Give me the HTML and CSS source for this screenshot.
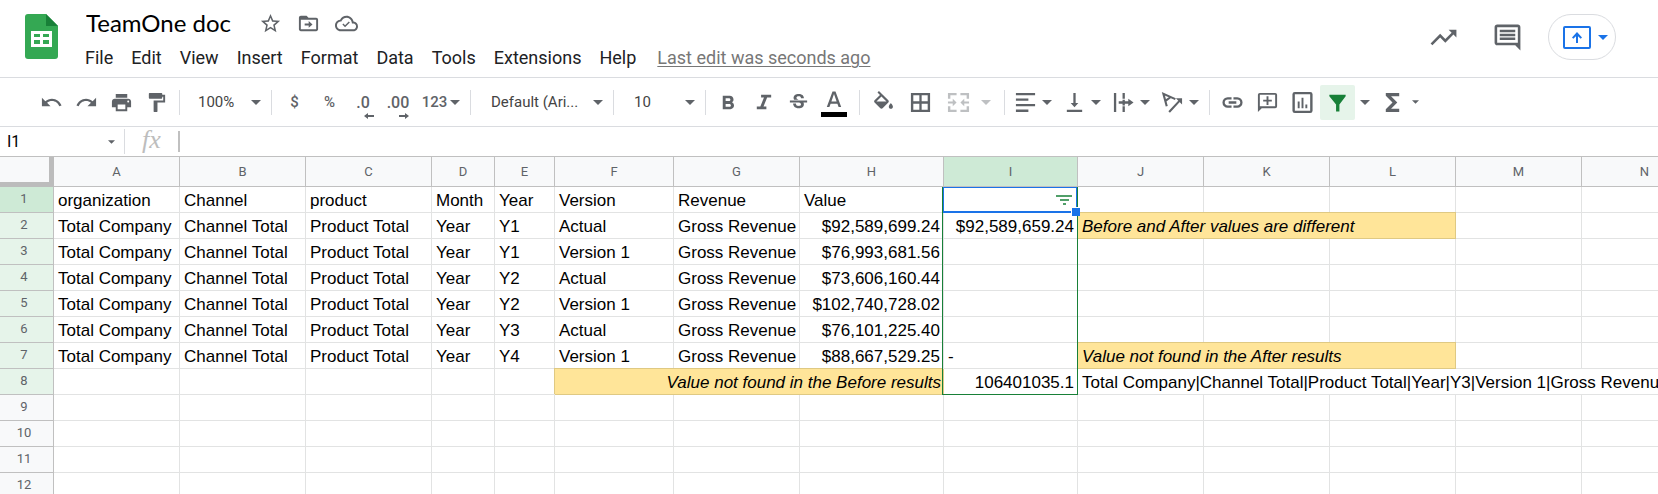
FILE: index.html
```html
<!DOCTYPE html>
<html lang="en">
<head>
<meta charset="utf-8">
<title>TeamOne doc</title>
<link rel="stylesheet" href="styles.css">
</head>
<body>
<svg class="defs" aria-hidden="true">
  <symbol id="caret" viewBox="0 0 10 5"><path d="M0 0h10L5 5z"/></symbol>
</svg>
<header class="header">
  <svg class="logo" viewBox="0 0 33 45" aria-label="Sheets"><path fill="#34a853" d="M3 0h18l12 12v30a3 3 0 0 1-3 3H3a3 3 0 0 1-3-3V3a3 3 0 0 1 3-3z"/><path fill="#188038" d="M21 0l12 12H21z"/><path fill="#fff" fill-rule="evenodd" d="M6 17h21v16H6zM9 20v3h6v-3zM18 20v3h6v-3zM9 26v4h6v-4zM18 26v4h6v-4z"/></svg>
  <div class="doc">
    <div class="title-row">
      <input class="title" aria-label="Document title" value="TeamOne doc">
      <button class="mini" aria-label="Star"><svg viewBox="0 0 24 24"><path d="M22 9.24l-7.19-.62L12 2 9.19 8.63 2 9.24l5.46 4.73L5.82 21 12 17.27 18.18 21l-1.63-7.03L22 9.24zM12 15.4l-3.76 2.27 1-4.28-3.32-2.88 4.38-.38L12 6.1l1.71 4.04 4.38.38-3.32 2.88 1 4.28L12 15.4z"/></svg></button>
      <button class="mini" aria-label="Move"><svg viewBox="0 0 24 24"><path d="M20 6h-8l-2-2H4c-1.100 0-2 .9-2 2v12c0 1.100.9 2 2 2h16c1.100 0 2-.9 2-2V8c0-1.100-.9-2-2-2zm0 12H4V8h16v10zM12.200 16.500l4-3.500-4-3.500V12H8v2h4.200z"/></svg></button>
      <button class="mini" aria-label="Document status"><svg viewBox="0 0 24 24"><path d="M19.350 10.040C18.670 6.590 15.640 4 12 4 9.110 4 6.600 5.640 5.350 8.040 2.340 8.360 0 10.910 0 14c0 3.310 2.690 6 6 6h13c2.760 0 5-2.240 5-5 0-2.640-2.050-4.780-4.650-4.960zM19 18H6c-2.210 0-4-1.790-4-4 0-2.050 1.530-3.760 3.560-3.970l1.070-.11.5-.95C8.080 7.140 9.940 6 12 6c2.620 0 4.880 1.860 5.390 4.430l.3 1.500 1.530.11c1.560.1 2.780 1.410 2.780 2.960 0 1.650-1.350 3-3 3zM10.500 13.700l-1.700-1.700-1.100 1.100 2.800 2.800 5-5-1.100-1.100z"/></svg></button>
    </div>
    <nav class="menu">
      <button>File</button><button>Edit</button><button>View</button><button>Insert</button><button>Format</button><button>Data</button><button>Tools</button><button>Extensions</button><button>Help</button>
      <a class="last-edit" href="#">Last edit was seconds ago</a>
    </nav>
  </div>
  <div class="actions">
    <button aria-label="Activity"><svg viewBox="0 0 24 24"><path d="M16 6l2.290 2.290-4.880 4.880-4-4L2 16.590 3.410 18l6-6 4 4 6.300-6.290L22 12V6z"/></svg></button>
    <button aria-label="Comments"><svg viewBox="0 0 24 24"><path d="M21.990 4c0-1.100-.89-2-1.990-2H4c-1.100 0-2 .9-2 2v12c0 1.100.9 2 2 2h14l4 4-.010-18zM20 16H4V4h16v12zM6 12h12v2H6zm0-3h12v2H6zm0-3h12v2H6z"/></svg></button>
    <button class="present" aria-label="Present"><svg class="present-icon" viewBox="0 0 28 23"><path fill="none" stroke="currentColor" stroke-width="2" d="M2 1h24a1 1 0 0 1 1 1v19a1 1 0 0 1-1 1H2a1 1 0 0 1-1-1V2a1 1 0 0 1 1-1z"/><path d="M14 6l5 5.500-1.300 1.300-2.700-2.600V17h-2v-6.800l-2.700 2.600L9 11.500z"/></svg><svg class="caret"><use href="#caret"/></svg></button>
  </div>
</header>

<div class="toolbar" role="toolbar">
  <div class="group">
    <button aria-label="Undo"><svg viewBox="0 0 24 24"><path d="M12.500 8c-2.650 0-5.050.99-6.900 2.600L2 7v9h9l-3.620-3.620c1.390-1.160 3.160-1.880 5.120-1.880 3.540 0 6.550 2.310 7.600 5.500l2.370-.78C21.080 11.030 17.150 8 12.500 8z"/></svg></button>
    <button aria-label="Redo"><svg viewBox="0 0 24 24"><path d="M18.400 10.600C16.550 8.990 14.150 8 11.500 8c-4.650 0-8.580 3.030-9.960 7.220L3.900 16c1.050-3.190 4.050-5.500 7.600-5.500 1.950 0 3.730.72 5.120 1.880L13 16h9V7l-3.600 3.600z"/></svg></button>
    <button aria-label="Print"><svg viewBox="0 0 24 24"><path d="M19 8H5c-1.660 0-3 1.340-3 3v6h4v4h12v-4h4v-6c0-1.660-1.340-3-3-3zm-3 11H8v-5h8v5zm3-7c-.55 0-1-.45-1-1s.45-1 1-1 1 .45 1 1-.45 1-1 1zm-1-9H6v4h12V3z"/></svg></button>
    <button aria-label="Paint format"><svg viewBox="0 0 24 24"><path d="M18 4V3c0-.55-.45-1-1-1H5c-.55 0-1 .45-1 1v4c0 .55.45 1 1 1h12c.55 0 1-.45 1-1V6h1v4H9v11c0 .55.45 1 1 1h2c.55 0 1-.45 1-1v-9h8V4h-3z"/></svg></button>
  </div>
  <label class="pick pick-zoom"><select aria-label="Zoom"><option>100%</option></select><svg class="caret"><use href="#caret"/></svg></label>
  <div class="group">
    <button>$</button>
    <button>%</button>
    <button class="decimal" aria-label="Decrease decimal places">.0<svg viewBox="0 0 10 6"><path d="M10 2H4V0L0 3l4 3V4h6z"/></svg></button>
    <button class="decimal" aria-label="Increase decimal places">.00<svg viewBox="0 0 10 6"><path d="M0 2h6V0l4 3-4 3V4H0z"/></svg></button>
    <button class="formats">123<svg class="caret"><use href="#caret"/></svg></button>
  </div>
  <label class="pick pick-font"><select aria-label="Font"><option>Default (Ari...</option></select><svg class="caret"><use href="#caret"/></svg></label>
  <label class="pick pick-size"><select aria-label="Font size"><option>10</option></select><svg class="caret"><use href="#caret"/></svg></label>
  <div class="group">
    <button aria-label="Bold"><svg viewBox="0 0 24 24"><path d="M15.600 11.790c.97-.67 1.650-1.770 1.650-2.790 0-2.260-1.750-4-4-4H6v14h8.040c2.090 0 3.710-1.700 3.710-3.790 0-1.520-.86-2.820-2.150-3.420zM9 7.500h3.500c.83 0 1.500.67 1.500 1.500s-.67 1.500-1.500 1.500H9v-3zm4 9H9v-3h4c.83 0 1.500.67 1.500 1.500s-.67 1.500-1.500 1.500z"/></svg></button>
    <button aria-label="Italic"><svg viewBox="0 0 24 24"><path d="M9.500 4v2.800h3L8.700 16.200H5V19h10v-2.800h-3l3.800-9.400H20V4z"/></svg></button>
    <button aria-label="Strikethrough"><svg viewBox="0 0 24 24"><path d="M7.240 8.750c-.26-.48-.39-1.030-.39-1.670 0-.61.13-1.160.4-1.670.26-.5.63-.93 1.110-1.290.48-.35 1.050-.63 1.700-.83.66-.19 1.390-.29 2.180-.29.81 0 1.540.11 2.210.34.66.22 1.230.54 1.690.94.47.4.83.88 1.080 1.430s.38 1.150.38 1.810h-3.010c0-.31-.05-.59-.15-.85-.09-.27-.24-.49-.44-.68-.2-.19-.45-.33-.75-.44-.3-.1-.66-.16-1.060-.16-.39 0-.74.04-1.030.13s-.53.21-.72.36c-.19.16-.34.34-.44.55-.1.21-.15.43-.15.66 0 .48.25.88.74 1.210.38.25.77.48 1.410.7H7.390c-.05-.08-.11-.17-.15-.25zM21 12v-2H3v2h9.620c.18.070.4.140.55.200.37.170.66.340.87.510s.35.360.43.570c.07.200.11.430.11.690 0 .23-.05.450-.14.660-.09.200-.23.380-.42.530-.19.150-.42.260-.71.350-.29.080-.63.130-1.010.13-.43 0-.83-.04-1.180-.13s-.66-.23-.91-.42c-.25-.19-.45-.44-.59-.75s-.25-.76-.25-1.210H6.400c0 .55.08 1.130.24 1.580s.37.850.65 1.210c.28.350.6.660.98.920.37.260.78.480 1.220.65.44.170.9.300 1.380.39.48.080.96.130 1.440.13.8 0 1.530-.09 2.180-.28s1.210-.45 1.670-.79c.46-.34.82-.77 1.070-1.270s.38-1.070.38-1.710c0-.6-.1-1.140-.31-1.610-.05-.11-.11-.23-.17-.33H21z"/></svg></button>
    <button class="text-color" aria-label="Text color"><svg viewBox="0 -2 28 28"><path d="M12.500 1.500 6.800 17h2.600l1.200-3.300h6.800l1.200 3.300h2.600L15.500 1.500zm-1.100 9.900L14 4l2.600 7.400z"/><path fill="#000" d="M1 22h26v5H1z"/></svg></button>
  </div>
  <span class="rule rule-wide"></span>
  <div class="group cells">
    <button aria-label="Fill color"><svg viewBox="0 0 22 22"><path d="M16.560 8.940L7.620 0 6.210 1.410l2.380 2.380-5.150 5.150c-.59.59-.59 1.540 0 2.120l5.500 5.500c.29.29.68.44 1.060.44s.77-.15 1.060-.44l5.500-5.500c.59-.58.59-1.530 0-2.120zM5.210 10L10 5.210 14.790 10H5.210zM19 11.500s-2 2.170-2 3.500c0 1.100.9 2 2 2s2-.9 2-2c0-1.330-2-3.500-2-3.500z"/></svg></button>
    <button aria-label="Borders"><svg viewBox="0 0 24 24"><path d="M2 2v20h20V2H2zm8.800 17.500H4.500v-6.300h6.300zm0-8.700H4.500V4.500h6.300zm8.700 8.700h-6.300v-6.300h6.300zm0-8.700h-6.300V4.500h6.300z"/></svg></button>
    <button class="off" aria-label="Merge cells"><svg viewBox="0 0 24 24"><path d="M1 2h9v2.500H3.500V8H1zM14 2h9v6h-2.500V4.500H14zM1 16h2.500v3.500H10V22H1zM20.500 16H23v6h-9v-2.500h6.500zM1 11h5V8l4 4-4 4v-3H1zM23 11h-5V8l-4 4 4 4v-3h5z"/></svg></button>
  </div>
  <button class="more off" aria-label="Merge options"><svg class="caret"><use href="#caret"/></svg></button>
  <span class="rule rule-align"></span>
  <div class="group combos">
    <button aria-label="Horizontal align"><svg viewBox="0 0 24 24"><path d="M2 2h20v2.500H2zM2 7.800h13v2.500H2zM2 13.500h20V16H2zM2 19.300h13v2.500H2z"/></svg><svg class="caret"><use href="#caret"/></svg></button>
    <button aria-label="Vertical align"><svg viewBox="0 0 24 24"><path d="M16 12.500h-2.800V2h-2.400v10.500H8l4 4.500zM4 19.500V22h16v-2.500z"/></svg><svg class="caret"><use href="#caret"/></svg></button>
    <button aria-label="Text wrapping"><svg viewBox="0 0 24 24"><path d="M2 2h2.400v20H2zM11 2h2.400v6H11zM11 16h2.400v6H11zM7 10.800h4V9h2.400v1.800H17V8l5.500 4-5.500 4v-2.800h-3.600V15H11v-1.800H7z"/></svg><svg class="caret"><use href="#caret"/></svg></button>
    <button aria-label="Text rotation"><svg viewBox="0 0 24 24"><path fill="none" stroke="currentColor" stroke-width="2.200" d="M6 16 2.500 3 15 8.500M5 10l5.500-4M8.500 22 20 9.500"/><path d="M15.500 7.500H22V14z"/></svg><svg class="caret"><use href="#caret"/></svg></button>
  </div>
  <span class="rule"></span>
  <div class="group">
    <button aria-label="Insert link"><svg viewBox="0 0 24 24"><path d="M3.900 12c0-1.710 1.390-3.100 3.100-3.100h4V6.500H7a5.500 5.500 0 0 0 0 11h4v-2.400H7c-1.710 0-3.100-1.390-3.100-3.100zM8 13.200h8v-2.400H8v2.400zm9-6.700h-4v2.400h4c1.710 0 3.100 1.390 3.100 3.100s-1.390 3.100-3.100 3.100h-4v2.400h4a5.500 5.500 0 0 0 0-11z"/></svg></button>
    <button aria-label="Insert comment"><svg viewBox="0 0 24 24"><path d="M20 2H4a2 2 0 0 0-2 2v18l4-4h14a2 2 0 0 0 2-2V4a2 2 0 0 0-2-2zm0 14H4V4h16zM11 14.500h2V11h3.500V9H13V5.500h-2V9H7.500v2H11z"/></svg></button>
    <button aria-label="Insert chart"><svg viewBox="0 0 24 24"><path d="M7 11h2v7H7zM11 7h2v11h-2zM15 14h2v4h-2zM20 1H4a2.500 2.500 0 0 0-2.500 2.500v17A2.500 2.500 0 0 0 4 23h16a2.500 2.500 0 0 0 2.500-2.500v-17A2.500 2.500 0 0 0 20 1zm0 19.500H4v-17h16z"/></svg></button>
    <button class="on" aria-label="Filter"><svg viewBox="0 0 24 24"><path d="M3.500 4h17v1.500L14 14v7.500h-3.500V14l-7-8.500z"/></svg></button>
  </div>
  <button class="more" aria-label="Filter views"><svg class="caret"><use href="#caret"/></svg></button>
  <button aria-label="Functions"><svg viewBox="0 0 24 24"><path d="M19 2H5v3l7 7-7 7v3h14v-3.500h-8.500L17 12l-6.500-6.500H19z"/></svg></button>
  <button class="tiny" aria-label="More functions"><svg class="caret" viewBox="0 0 10 5"><path d="M0 0h10L5 5z"/></svg></button>
</div>

<div class="formula">
  <div class="name-box"><input aria-label="Name box" value="I1"><svg class="caret" viewBox="0 0 10 5"><path d="M0 0h10L5 5z"/></svg></div>
  <span class="fx">fx</span>
  <input class="formula-input" aria-label="Formula">
</div>

<main class="sheet">
<table>
  <colgroup><col class="c-head"><col class="c-std"><col class="c-std"><col class="c-std"><col class="c-d"><col class="c-e"><col class="c-f"><col class="c-std"><col class="c-h"><col class="c-i"><col class="c-std"><col class="c-std"><col class="c-std"><col class="c-std"><col class="c-std"></colgroup>
  <thead>
    <tr><td class="corner"></td><th>A</th><th>B</th><th>C</th><th>D</th><th>E</th><th>F</th><th>G</th><th>H</th><th class="current">I</th><th>J</th><th>K</th><th>L</th><th>M</th><th>N</th></tr>
  </thead>
  <tbody>
    <tr><th class="current">1</th><td>organization</td><td>Channel</td><td>product</td><td>Month</td><td>Year</td><td>Version</td><td>Revenue</td><td>Value</td><td class="active"><div class="range"></div><div class="cursor"></div><div class="handle"></div><svg class="filter-mark" viewBox="0 0 16 10"><path d="M0 0h16v2H0zM4 4h9v2H4zM7 8h3v2H7z"/></svg></td><td></td><td></td><td></td><td></td><td></td></tr>
    <tr class="in"><th>2</th><td>Total Company</td><td>Channel Total</td><td>Product Total</td><td>Year</td><td>Y1</td><td>Actual</td><td>Gross Revenue</td><td class="num">$92,589,699.24</td><td class="num">$92,589,659.24</td><td class="note" colspan="3">Before and After values are different</td><td></td><td></td></tr>
    <tr class="in"><th>3</th><td>Total Company</td><td>Channel Total</td><td>Product Total</td><td>Year</td><td>Y1</td><td>Version 1</td><td>Gross Revenue</td><td class="num">$76,993,681.56</td><td></td><td></td><td></td><td></td><td></td><td></td></tr>
    <tr class="in"><th>4</th><td>Total Company</td><td>Channel Total</td><td>Product Total</td><td>Year</td><td>Y2</td><td>Actual</td><td>Gross Revenue</td><td class="num">$73,606,160.44</td><td></td><td></td><td></td><td></td><td></td><td></td></tr>
    <tr class="in"><th>5</th><td>Total Company</td><td>Channel Total</td><td>Product Total</td><td>Year</td><td>Y2</td><td>Version 1</td><td>Gross Revenue</td><td class="num">$102,740,728.02</td><td></td><td></td><td></td><td></td><td></td><td></td></tr>
    <tr class="in"><th>6</th><td>Total Company</td><td>Channel Total</td><td>Product Total</td><td>Year</td><td>Y3</td><td>Actual</td><td>Gross Revenue</td><td class="num">$76,101,225.40</td><td></td><td></td><td></td><td></td><td></td><td></td></tr>
    <tr class="in"><th>7</th><td>Total Company</td><td>Channel Total</td><td>Product Total</td><td>Year</td><td>Y4</td><td>Version 1</td><td>Gross Revenue</td><td class="num">$88,667,529.25</td><td>-</td><td class="note" colspan="3">Value not found in the After results</td><td></td><td></td></tr>
    <tr class="in"><th>8</th><td></td><td></td><td></td><td></td><td></td><td class="note num" colspan="3">Value not found in the Before results</td><td class="num">106401035.1</td><td colspan="5">Total Company|Channel Total|Product Total|Year|Y3|Version 1|Gross Revenue</td></tr>
    <tr><th>9</th><td></td><td></td><td></td><td></td><td></td><td></td><td></td><td></td><td></td><td></td><td></td><td></td><td></td><td></td></tr>
    <tr><th>10</th><td></td><td></td><td></td><td></td><td></td><td></td><td></td><td></td><td></td><td></td><td></td><td></td><td></td><td></td></tr>
    <tr><th>11</th><td></td><td></td><td></td><td></td><td></td><td></td><td></td><td></td><td></td><td></td><td></td><td></td><td></td><td></td></tr>
    <tr><th>12</th><td></td><td></td><td></td><td></td><td></td><td></td><td></td><td></td><td></td><td></td><td></td><td></td><td></td><td></td></tr>
  </tbody>
</table>
</main>
</body>
</html>
```
FILE: styles.css
```css
* { box-sizing: border-box; }
body {
  margin: 0;
  height: 100vh;
  display: flex;
  flex-direction: column;
  overflow: hidden;
  background: #fff;
  color: #000;
  font-family: Roboto, sans-serif;
}
button, input, select {
  font: inherit;
  color: inherit;
  background: none;
  border: 0;
  padding: 0;
  margin: 0;
  outline: 0;
}
svg { fill: currentColor; display: block; flex: none; }
.defs { position: absolute; width: 0; height: 0; }
.caret { width: 10px; height: 5px; }

/* header */
.header {
  display: flex;
  padding: 7px 42px 5px 25px;
  border-bottom: 1px solid #dadce0;
}
.logo { width: 33px; height: 45px; margin-top: 7px; }
.doc { padding-left: 27px; }
.title-row { display: flex; align-items: center; height: 32px; color: #5f6368; }
.title {
  width: 174px;
  padding-left: 1px;
  font-family: Lato, sans-serif;
  font-size: 24px;
  line-height: 32px;
  color: #000;
}
.mini { width: 24px; margin-right: 14px; }
.mini svg { width: 23px; height: 23px; }
.menu { display: flex; gap: 18px; height: 28px; margin-top: 5px; align-items: center; font-size: 18px; line-height: 28px; color: #202124; white-space: nowrap; }
.last-edit { color: #777; margin-left: 3px; text-decoration: underline; text-underline-offset: 2px; text-decoration-thickness: 1px; }
.actions { margin-left: auto; display: flex; align-items: center; gap: 33px; height: 60px; color: #5f6368; }
.actions > button svg:first-child { width: 31px; height: 31px; }
.present {
  display: flex;
  align-items: center;
  gap: 7px;
  width: 68px;
  height: 46px;
  margin-left: -8px;
  padding-left: 14px;
  border: 1px solid #dadce0;
  border-radius: 23px;
  color: #1a73e8;
}
.actions .present .present-icon { width: 28px; height: 23px; }

/* toolbar */
.toolbar {
  display: flex;
  align-items: center;
  height: 49px;
  padding-left: 34px;
  border-bottom: 1px solid #dadce0;
  color: #5f6368;
  font-size: 15px;
  font-weight: 500;
}
.group { display: flex; }
.toolbar button {
  flex: none;
  display: flex;
  align-items: center;
  justify-content: center;
  width: 35px;
  height: 35px;
}
.toolbar button svg:first-child:not(.caret) { width: 23px; height: 23px; }
.toolbar .text-color svg:first-child:not(.caret) { width: 28px; height: 28px; overflow: visible; }
.pick {
  display: flex;
  align-items: center;
  justify-content: space-between;
  height: 25px;
  padding: 0 10px 0 20px;
  border-left: 1px solid #dadce0;
  margin-left: 5px;
}
.pick select { appearance: none; flex: 1; min-width: 0; font-weight: 400; color: #444; }
.pick-zoom, .pick-size { width: 93px; border-right: 1px solid #dadce0; margin-right: 5px; }
.pick-zoom { padding-left: 18px; }
.pick-font { width: 143px; }
.pick-size { margin-left: 0; }
.toolbar .decimal { position: relative; font-size: 16px; padding-right: 3px; }
.toolbar .decimal svg:first-child:not(.caret) { position: absolute; right: 8px; bottom: 1px; width: 10px; height: 6px; }
.toolbar .formats { width: 48px; gap: 3px; }
.rule { width: 1px; height: 25px; margin: 0 5px; background: #dadce0; }
.rule-wide { margin: 0 5px 0 8px; }
.rule-align { margin: 0 3px 0 8px; }
.cells { gap: 3px; }
.off { opacity: .4; }
.toolbar .more { width: 20px; }
.toolbar .tiny { width: 10px; }
.toolbar .tiny .caret { width: 7px; height: 4px; }
.toolbar .combos button { width: 49px; gap: 5px; justify-content: flex-start; padding-left: 6px; }
.toolbar .on { background: #e6f4ea; color: #188038; border-radius: 2px; }

/* formula bar */
.formula { display: flex; align-items: center; height: 30px; border-bottom: 1px solid #c0c0c0; font-size: 16px; }
.name-box { display: flex; align-items: center; width: 125px; height: 25px; padding: 0 9px 0 7px; border-right: 1px solid #dadce0; }
.name-box input { flex: 1; min-width: 0; }
.name-box .caret { width: 7px; height: 4px; color: #5f6368; }
.fx { width: 53px; padding: 0 0 4px 17px; font-family: "Liberation Serif", serif; font-style: italic; font-size: 26px; line-height: 24px; color: #bdbdbd; }
.formula-input { flex: 1; height: 21px; border-left: 2px solid #c0c0c0; padding-left: 6px; }

/* grid */
.sheet { flex: 1; overflow: hidden; font-family: "Liberation Sans", Arial, sans-serif; }
table { table-layout: fixed; width: 1708px; border-collapse: separate; border-spacing: 0; }
.c-head { width: 54px; }
.c-std { width: 126px; }
.c-d { width: 63px; }
.c-e { width: 60px; }
.c-f { width: 119px; }
.c-h { width: 144px; }
.c-i { width: 134px; }
th {
  padding: 0;
  background: #f8f9fa;
  border-right: 1px solid #c0c0c0;
  border-bottom: 1px solid #c0c0c0;
  font-family: Roboto, sans-serif;
  font-size: 13px;
  font-weight: 400;
  line-height: 16px;
  color: #5f6368;
}
thead th { height: 30px; }
.corner { background: #f8f9fa; border-right: 5px solid #bcbcbc; border-bottom: 5px solid #bcbcbc; }
tbody th { padding: 0 5px 2px 0; }
.in th { background: #e6f4ea; }
th.current, tbody th.current { background: #ceead6; }
tbody td {
  height: 26px;
  padding: 2px 3px 0 4px;
  border-right: 1px solid #e2e3e3;
  border-bottom: 1px solid #e2e3e3;
  font-size: 17px;
  line-height: 22px;
  white-space: nowrap;
}
td.num { text-align: right; }
td.note { background: #ffe599; font-style: italic; border-color: #dfc983; box-shadow: 0 -1px #dfc983; }
td.note.num { padding-right: 2px; box-shadow: -1px -1px #dfc983; }
td.active { position: relative; }
.range { position: absolute; left: -2px; top: 0; width: 136px; height: 208px; border: 1px solid #188038; border-top: 0; }
.cursor { position: absolute; left: -1px; top: 0; width: 134px; height: 26px; border: 2px solid #1a73e8; border-width: 1px 1px 2px; }
.handle { position: absolute; right: -3px; bottom: -4px; width: 9px; height: 9px; background: #1a73e8; border: solid #fff; border-width: 1px 0 0 1px; }
.filter-mark { position: absolute; right: 5px; top: 8px; width: 16px; height: 10px; color: #188038; opacity: .75; }
```
